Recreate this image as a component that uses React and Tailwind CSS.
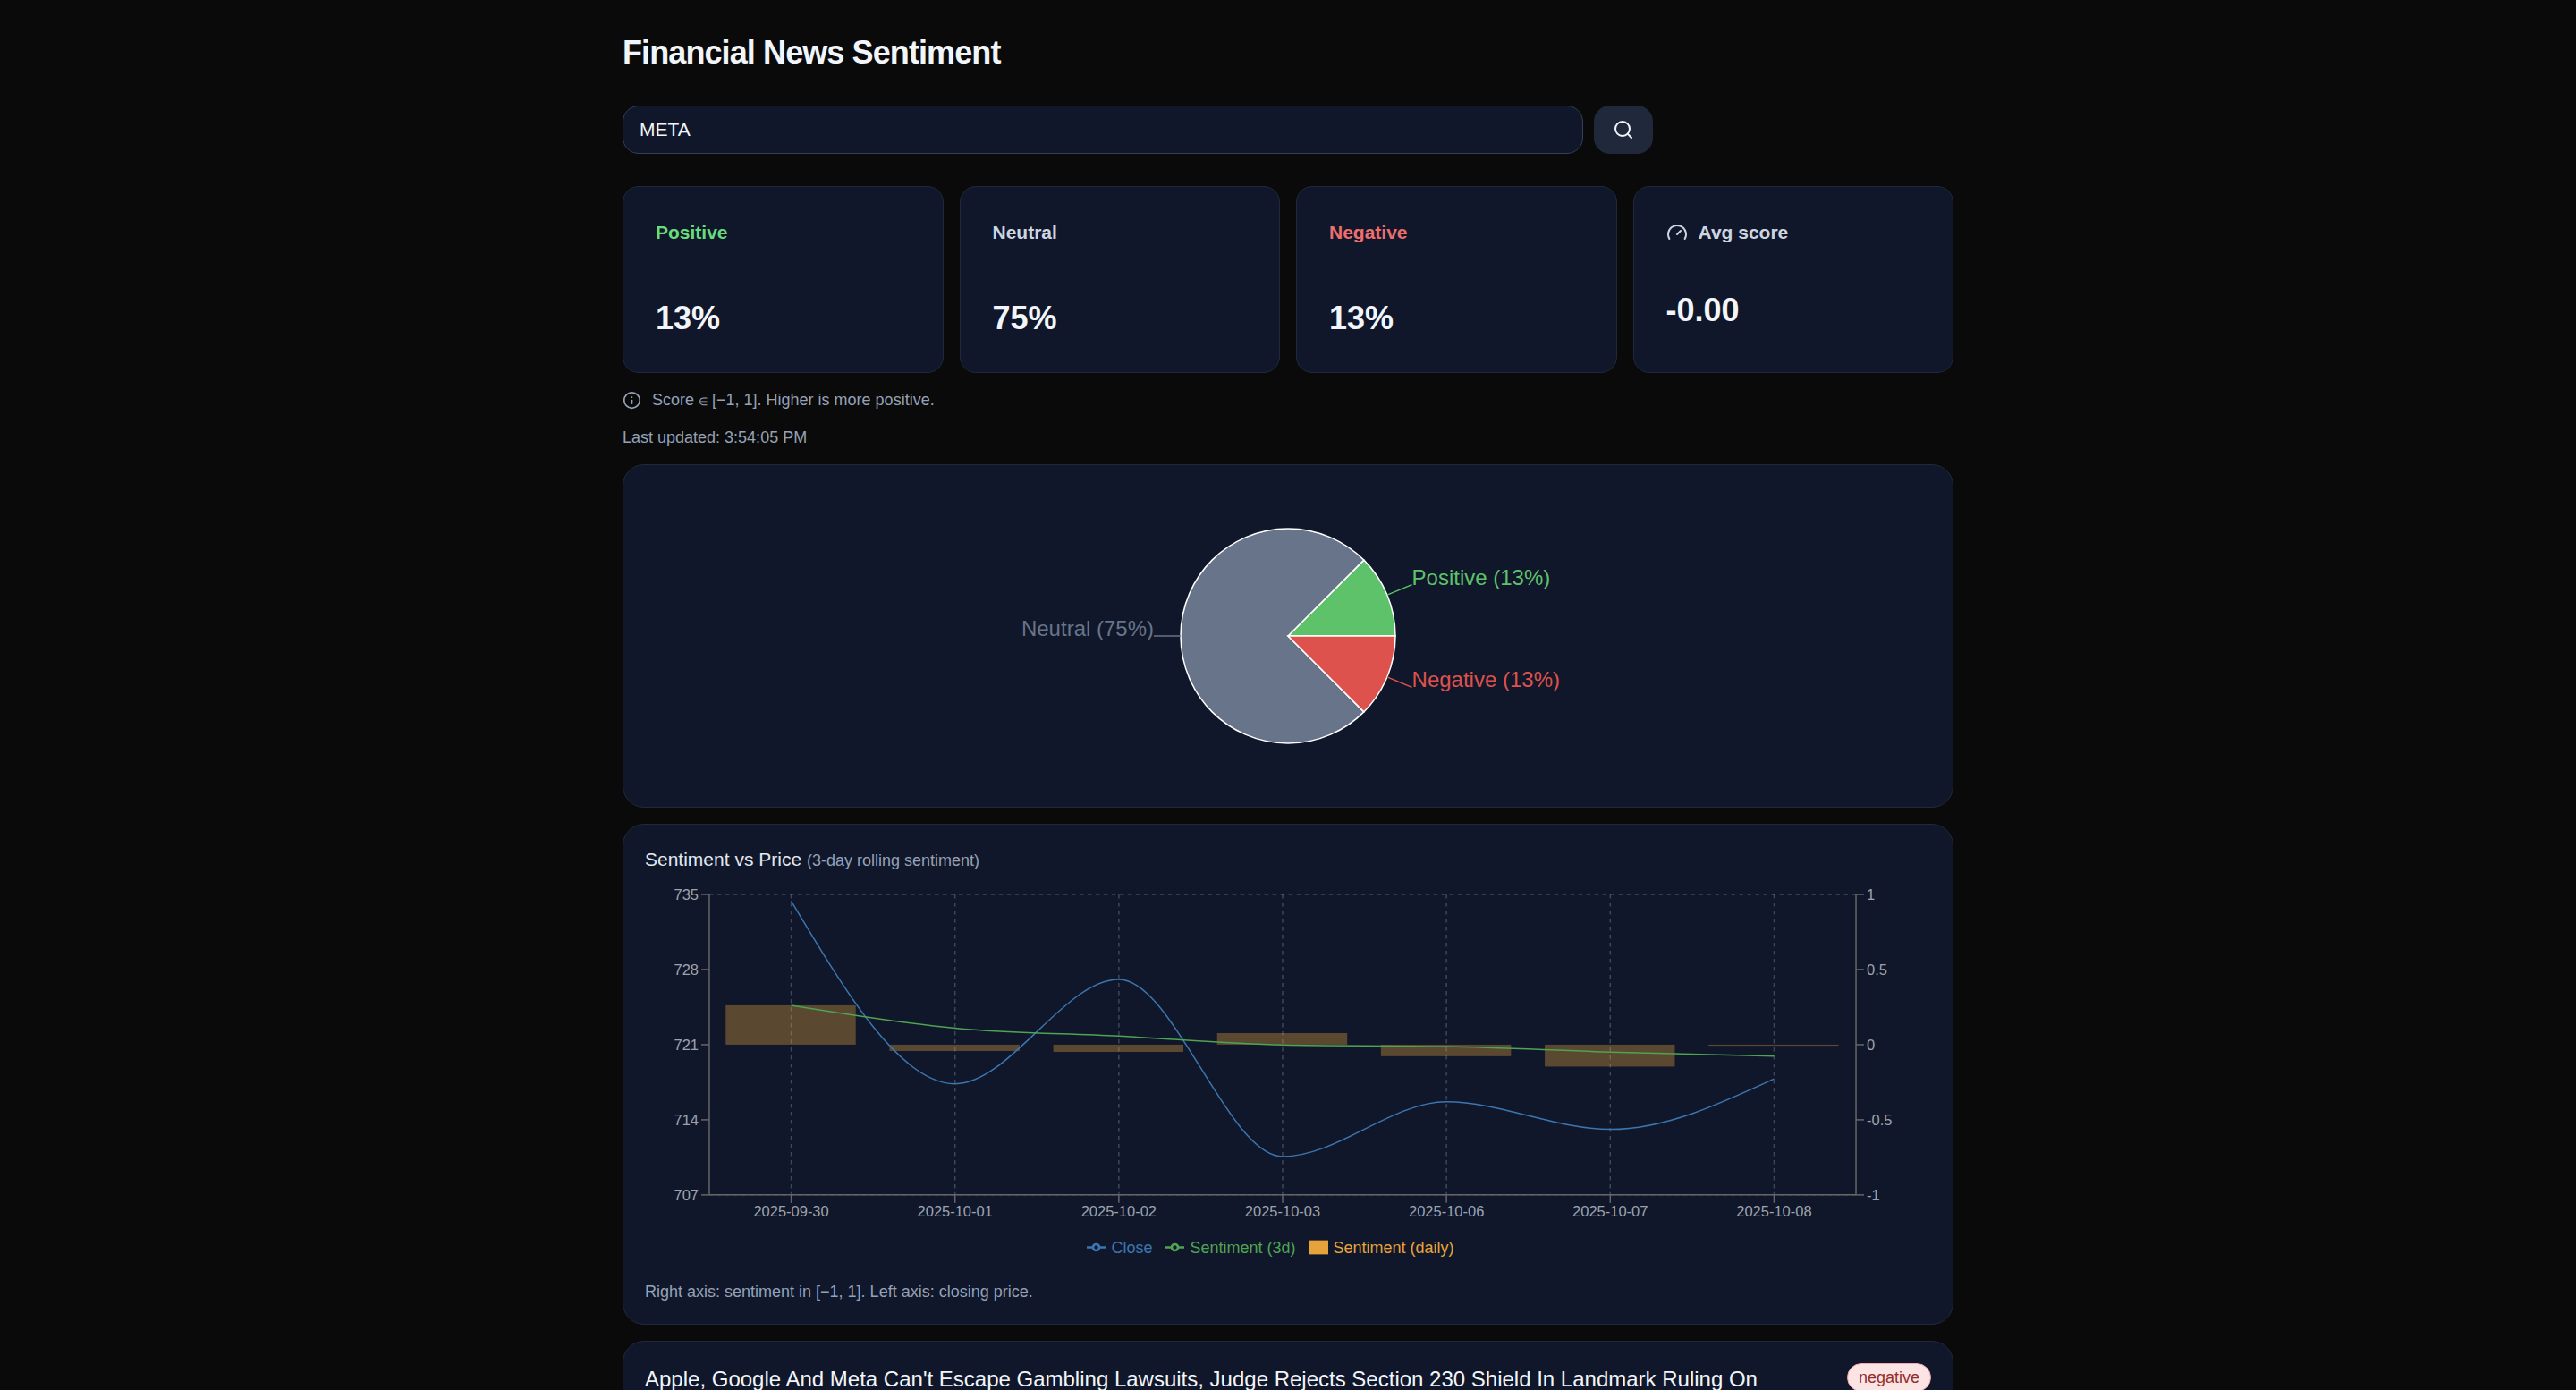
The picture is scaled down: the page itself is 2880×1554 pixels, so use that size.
import React from "react";
import { Search, Gauge, Info } from "lucide-react";

const PANEL = "border border-[#20293b] bg-[#10172a]";

const stats = [
  { label: "Positive", value: "13%", tone: "text-[#66dc7d]", gap: "mt-[57px]" },
  { label: "Neutral", value: "75%", tone: "text-[#cdd5e1]", gap: "mt-[57px]" },
  { label: "Negative", value: "13%", tone: "text-[#ed6e6c]", gap: "mt-[57px]" },
  { label: "Avg score", value: "-0.00", tone: "text-[#cdd5e1]", gap: "mt-12", icon: true },
];

const slices = [
  { name: "Positive (13%)", from: 0, to: 45, color: "#5ec26a" },
  { name: "Neutral (75%)", from: 45, to: 315, color: "#677489" },
  { name: "Negative (13%)", from: 315, to: 360, color: "#dd524c" },
];

const series = [
  { date: "2025-09-30", close: 734.39, rolling: 0.262, daily: 0.262 },
  { date: "2025-10-01", close: 717.35, rolling: 0.11, daily: -0.042 },
  { date: "2025-10-02", close: 727.08, rolling: 0.057, daily: -0.048 },
  { date: "2025-10-03", close: 710.58, rolling: -0.002, daily: 0.077 },
  { date: "2025-10-06", close: 715.67, rolling: -0.013, daily: -0.077 },
  { date: "2025-10-07", close: 713.11, rolling: -0.049, daily: -0.146 },
  { date: "2025-10-08", close: 717.82, rolling: -0.077, daily: -0.007 },
];

const BLUE = "#3c76b0";
const GREEN = "#4fa352";
const ORANGE = "#e8a23b";

function polar(cx, cy, r, deg) {
  const a = (deg * Math.PI) / 180;
  return [cx + r * Math.cos(a), cy - r * Math.sin(a)];
}

function PieChart() {
  const cx = 360;
  const cy = 167;
  const r = 120;
  return (
    <svg viewBox="0 0 720 334" className="mx-auto block h-[334px] max-w-full overflow-visible" role="img" aria-label="Sentiment share">
      {slices.map((s) => {
        const [x1, y1] = polar(cx, cy, r, s.from);
        const [x2, y2] = polar(cx, cy, r, s.to);
        const mid = (s.from + s.to) / 2;
        const [lx1, ly1] = polar(cx, cy, r, mid);
        const [lx2, ly2] = polar(cx, cy, r + 30, mid);
        const large = s.to - s.from > 180 ? 1 : 0;
        return (
          <g key={s.name}>
            <path
              d={`M${cx},${cy}L${x1},${y1}A${r},${r},0,${large},0,${x2},${y2}Z`}
              fill={s.color}
              stroke="#fff"
              strokeWidth="1.5"
            />
            <path d={`M${lx1},${ly1}L${lx2},${ly2}`} stroke={s.color} strokeWidth="1.5" />
            <text x={lx2} y={ly2} fill={s.color} fontSize="24" textAnchor={lx2 > cx ? "start" : "end"}>
              {s.name}
            </text>
          </g>
        );
      })}
    </svg>
  );
}

/* Monotone cubic interpolation through the points, as a path string. */
function monotone(pts) {
  const n = pts.length;
  const slope = [];
  for (let i = 0; i < n - 1; i++) slope.push((pts[i + 1][1] - pts[i][1]) / (pts[i + 1][0] - pts[i][0]));
  const t = new Array(n);
  for (let i = 1; i < n - 1; i++) {
    const a = slope[i - 1];
    const b = slope[i];
    t[i] = a * b <= 0 ? 0 : Math.sign(a) * Math.min(Math.abs(a), Math.abs(b), Math.abs(a + b) / 4) * 2;
  }
  t[0] = (3 * slope[0] - t[1]) / 2;
  t[n - 1] = (3 * slope[n - 2] - t[n - 2]) / 2;
  let d = `M${pts[0][0]},${pts[0][1]}`;
  for (let i = 0; i < n - 1; i++) {
    const dx = (pts[i + 1][0] - pts[i][0]) / 3;
    d += `C${pts[i][0] + dx},${pts[i][1] + dx * t[i]},${pts[i + 1][0] - dx},${pts[i + 1][1] - dx * t[i + 1]},${pts[i + 1][0]},${pts[i + 1][1]}`;
  }
  return d;
}

function PriceChart() {
  const left = 48;
  const right = 903;
  const top = 8;
  const bottom = 232;
  const step = (right - left) / series.length;
  const x = (i) => left + step * (i + 0.5);
  const yPrice = (v) => bottom - ((v - 707) / 28) * (bottom - top);
  const ySent = (v) => (top + bottom) / 2 - (v * (bottom - top)) / 2;
  return (
    <svg viewBox="0 0 959 258" className="block w-full overflow-visible" role="img" aria-label="Sentiment and closing price by day">
      <g stroke="#94a1b7" strokeOpacity="0.35" strokeDasharray="3 3">
        <line x1={left} x2={right} y1={top} y2={top} />
        <line x1={left} x2={right} y1={bottom} y2={bottom} />
        {series.map((p, i) => (
          <line key={p.date} x1={x(i)} x2={x(i)} y1={top} y2={bottom} />
        ))}
      </g>
      {series.map((p, i) => {
        const a = ySent(0);
        const b = ySent(p.daily);
        return (
          <rect key={p.date} x={left + step * i + step * 0.1} y={Math.min(a, b)} width="97" height={Math.abs(a - b)} fill={ORANGE} fillOpacity="0.35" />
        );
      })}
      <g stroke="#666">
        <line x1={left} x2={right} y1={bottom} y2={bottom} />
        <line x1={left} x2={left} y1={top} y2={bottom} />
        <line x1={right} x2={right} y1={top} y2={bottom} />
        {series.map((p, i) => (
          <line key={p.date} x1={x(i)} x2={x(i)} y1={bottom} y2={bottom + 6} />
        ))}
        {[0, 1, 2, 3, 4].map((k) => (
          <g key={k}>
            <line x1={left - 6} x2={left} y1={top + 56 * k} y2={top + 56 * k} />
            <line x1={right} x2={right + 6} y1={top + 56 * k} y2={top + 56 * k} />
          </g>
        ))}
      </g>
      <g fill="#9ca3af" fontSize="11">
        {series.map((p, i) => (
          <text key={p.date} x={x(i)} y={bottom + 16} textAnchor="middle">{p.date}</text>
        ))}
        {["735", "728", "721", "714", "707"].map((v, k) => (
          <text key={v} x={left - 8} y={top + 56 * k + 4} textAnchor="end">{v}</text>
        ))}
        {["1", "0.5", "0", "-0.5", "-1"].map((v, k) => (
          <text key={v} x={right + 8} y={top + 56 * k + 4}>{v}</text>
        ))}
      </g>
      <path d={monotone(series.map((p, i) => [x(i), yPrice(p.close)]))} fill="none" stroke={BLUE} />
      <path d={monotone(series.map((p, i) => [x(i), ySent(p.rolling)]))} fill="none" stroke={GREEN} />
    </svg>
  );
}

function LineMark() {
  return (
    <svg viewBox="0 0 32 32" className="size-[21px]" fill="none" stroke="currentColor" strokeWidth="4" aria-hidden="true">
      <path d="M0,16h10.67A5.33,5.33,0,1,1,21.33,16H32M21.33,16A5.33,5.33,0,1,1,10.67,16" />
    </svg>
  );
}

function BarMark() {
  return (
    <svg viewBox="0 0 32 32" className="size-[21px]" fill="currentColor" aria-hidden="true">
      <path d="M0,4h32v24h-32z" />
    </svg>
  );
}

function Legend() {
  return (
    <ul className="flex justify-center pr-[39px] pt-2 text-lg leading-6">
      <li className="flex items-center gap-1.5 text-[#3c76b0]"><LineMark />Close</li>
      <li className="ml-[15px] flex items-center gap-1.5 text-[#4fa352]"><LineMark />Sentiment (3d)</li>
      <li className="ml-[15px] flex items-center gap-1.5 text-[#e8a23b]"><BarMark />Sentiment (daily)</li>
    </ul>
  );
}

export default function App() {
  return (
    <div className="h-screen overflow-hidden bg-[#0a0a0a] font-['Liberation_Sans',Arial,sans-serif] text-[#f2f5f9]">
      <main className="mx-auto flex max-w-[1536px] flex-col px-6 pt-9">
        <h1 className="text-4xl leading-[45px] font-bold tracking-tight">Financial News Sentiment</h1>

        <form className="mt-[37px] flex max-w-6xl gap-3" onSubmit={(e) => e.preventDefault()}>
          <input
            aria-label="Ticker"
            defaultValue="META"
            className="h-[54px] min-w-0 flex-1 rounded-[18px] border border-[#344156] bg-[#10172a] px-[18px] text-[21px] outline-none"
          />
          <button type="submit" aria-label="Search" className="flex h-[54px] w-[66px] items-center justify-center rounded-[18px] bg-[#20293b]">
            <Search className="size-6" />
          </button>
        </form>

        <section className="mt-9 grid grid-cols-4 gap-[18px]">
          {stats.map((s) => (
            <article key={s.label} className={`${PANEL} rounded-[18px] p-9`}>
              <h2 className={`flex items-center gap-3 text-[21px] leading-[30px] font-bold ${s.tone}`}>
                {s.icon && <Gauge className="size-6" />}
                {s.label}
              </h2>
              <p className={`text-4xl leading-[48px] font-bold ${s.gap}`}>{s.value}</p>
            </article>
          ))}
        </section>

        <p className="mt-[18px] flex items-center gap-3 text-lg leading-6 text-[#94a1b7]">
          <Info className="size-[21px]" />
          <span>
            Score <span className="text-xs">∈</span> [−1, 1]. Higher is more positive.
          </span>
        </p>
        <p className="mt-[18px] text-lg leading-6 text-[#94a1b7]">Last updated: 3:54:05 PM</p>

        <section className={`${PANEL} mt-[18px] rounded-3xl p-6`}>
          <PieChart />
        </section>

        <section className={`${PANEL} mt-[18px] rounded-3xl p-6`}>
          <h2 className="text-[21px] leading-[30px] text-[#e2e8f0]">
            Sentiment vs Price <span className="text-lg leading-6 text-[#94a1b7]">(3-day rolling sentiment)</span>
          </h2>
          <div className="mt-3 h-[432px]">
            <PriceChart />
            <Legend />
          </div>
          <p className="mt-3 text-lg leading-6 text-[#94a1b7]">Right axis: sentiment in [−1, 1]. Left axis: closing price.</p>
        </section>

        <article className={`${PANEL} mt-[18px] flex items-start justify-between gap-6 rounded-3xl p-6`}>
          <a href="#" className="text-2xl leading-9">
            Apple, Google And Meta Can't Escape Gambling Lawsuits, Judge Rejects Section 230 Shield In Landmark Ruling On
          </a>
          <span className="rounded-full border border-[#f3aaa8] bg-[#fbe4e3] px-3 py-[3px] text-lg leading-6 text-[#932d28]">negative</span>
        </article>
      </main>
    </div>
  );
}
